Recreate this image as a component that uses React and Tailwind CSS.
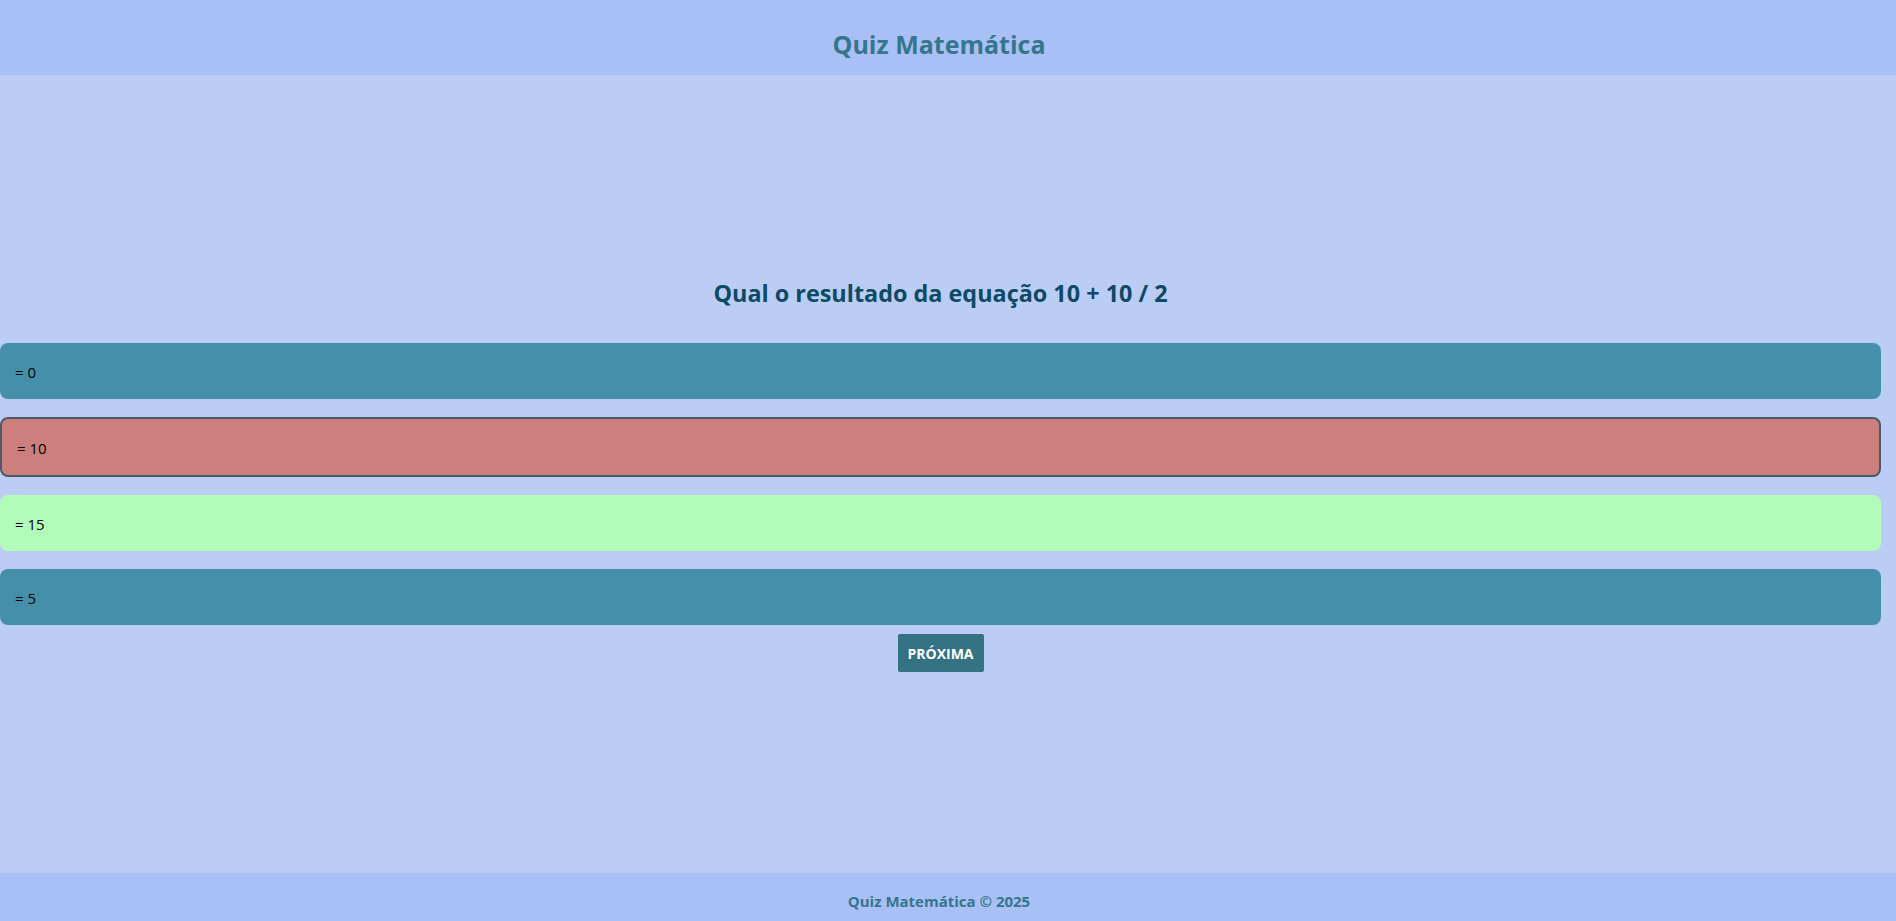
export default function App() {
  const font = { fontFamily: '"Open Sans", "Noto Sans", sans-serif' };
  return (
    <div className="min-h-screen flex flex-col bg-[#bbcdf4]" style={font}>
      <header className="h-[75px] shrink-0 bg-[#a9c0f7] flex items-center justify-center pt-[13px] pr-[18px]">
        <h1 className="text-[25px] font-bold text-[#35768b] leading-none">Quiz Matemática</h1>
      </header>
      <main className="flex-1 flex flex-col pt-[202px] w-[1881px]">
        <h2 className="text-center text-[23.4px] leading-[32px] font-bold text-[#0e4a64]">
          Qual o resultado da equação 10 + 10 / 2
        </h2>
        <div className="mt-[34px] flex flex-col gap-[18px]">
          <div className="h-[56px] rounded-[8px] bg-[#4490aa] flex items-center pl-[15px] pt-[2px] text-[15px] text-black">= 0</div>
          <div className="h-[60px] rounded-[8px] bg-[#cd7f7e] border-2 border-[#4b5a66] flex items-center pl-[15px] pt-[2px] text-[15px] text-black">= 10</div>
          <div className="h-[56px] rounded-[8px] bg-[#b3fbb9] flex items-center pl-[15px] pt-[2px] text-[15px] text-black">= 15</div>
          <div className="h-[56px] rounded-[8px] bg-[#4490aa] flex items-center pl-[15px] pt-[2px] text-[15px] text-black">= 5</div>
        </div>
        <div className="mt-[9px] flex justify-center">
          <button className="h-[38px] w-[86px] rounded-[2px] bg-[#347284] text-white font-bold text-[14px]">PRÓXIMA</button>
        </div>
      </main>
      <footer className="h-[48px] shrink-0 bg-[#a9c0f7] flex items-center justify-center pt-[8px] pr-[18px]">
        <span className="text-[15px] font-bold text-[#35768b]">Quiz Matemática © 2025</span>
      </footer>
    </div>
  );
}
